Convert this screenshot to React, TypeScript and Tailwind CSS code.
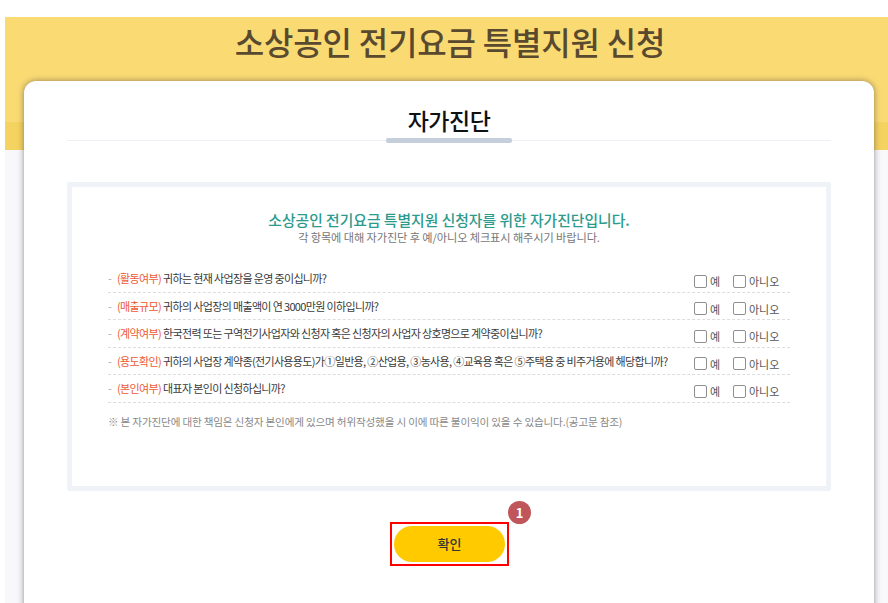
const rows = [
  { tag: "(활동여부)", text: "귀하는 현재 사업장을 운영 중이십니까?" },
  { tag: "(매출규모)", text: "귀하의 사업장의 매출액이 연 3000만원 이하입니까?" },
  { tag: "(계약여부)", text: "한국전력 또는 구역전기사업자와 신청자 혹은 신청자의 사업자 상호명으로 계약중이십니까?" },
  { tag: "(용도확인)", text: "귀하의 사업장 계약종(전기사용용도)가①일반용, ②산업용, ③농사용, ④교육용 혹은 ⑤주택용 중 비주거용에 해당합니까?" },
  { tag: "(본인여부)", text: "대표자 본인이 신청하십니까?" },
];

function CheckItem({ label, className }: { label: string; className: string }) {
  return (
    <label className={`flex items-center gap-[3px] text-[11px] text-[#555] ${className}`}>
      <span className="w-[13px] h-[13px] border border-[#8f8f8f] rounded-[2px] bg-white" />
      {label}
    </label>
  );
}

export default function App() {
  return (
    <div
      className="h-[603px] overflow-hidden bg-white pt-[17px] pl-[5px]"
      style={{ fontFamily: '"Noto Sans CJK KR", "Noto Sans", sans-serif' }}
    >
      <div className="h-[133px] flex flex-col bg-[#fadb73]">
        <h1 className="h-[105px] pl-[7px] text-center text-[32px] leading-[48px] font-medium tracking-[-0.2px] text-[#59492f]">
          소상공인 전기요금 특별지원 신청
        </h1>
        <div className="h-[28px] bg-[#f5d360]" />
      </div>
      <div className="flow-root h-[453px] bg-[#f8f8fa] pl-[19px] pr-[14px]">
        <div className="relative -mt-[69px] h-[600px] bg-white rounded-t-[12px] shadow-[0_0_6px_rgba(60,50,60,0.55)] px-[43px]">
          <div className="relative h-[60px] border-b border-[#eef0f5] text-center">
            <h2 className="pt-[21px] text-[23px] leading-[36px] font-medium tracking-[-0.5px] text-[#111]">자가진단</h2>
            <div className="absolute left-[319px] top-[57px] w-[126px] h-[5px] rounded-[2px] bg-[#c5cedb]" />
          </div>
          <div className="mt-[41px] h-[309px] border-[5px] border-[#eff2f7] rounded-[2px] pt-[22px] pl-[36px] pr-[36px]">
            <p className="text-center text-[14.8px] leading-[21px] font-medium text-[#2c9a8c]">
              소상공인 전기요금 특별지원 신청자를 위한 자가진단입니다.
            </p>
            <p className="text-center text-[11.2px] leading-[15px] tracking-[-0.1px] text-[#777]">
              각 항목에 대해 자가진단 후 예/아니오 체크표시 해주시기 바랍니다.
            </p>
            <div className="mt-[20px]">
              {rows.map((row) => (
                <div
                  key={row.tag}
                  className="flex items-center h-[27.5px] border-b border-dashed border-[#dddddd] text-[11px] tracking-[-0.65px]"
                >
                  <span className="text-[#aaa] w-[9px]">-</span>
                  <span className="text-[#ee5a33]">{row.tag}</span>
                  <span className="ml-[2px] text-[#3a3a3a]">{row.text}</span>
                  <div className="ml-auto flex tracking-normal pt-[6px]">
                    <CheckItem label="예" className="w-[39px]" />
                    <CheckItem label="아니오" className="w-[57px]" />
                  </div>
                </div>
              ))}
            </div>
            <p className="mt-[11px] text-[10.6px] leading-[16px] tracking-[-0.18px] text-[#888]">
              ※ 본 자가진단에 대한 책임은 신청자 본인에게 있으며 허위작성했을 시 이에 따른 불이익이 있을 수 있습니다.(공고문 참조)
            </p>
          </div>
          <div className="relative mt-[31px] w-[119px] h-[44px] border-2 border-[#ff0000] p-[2px] ml-[323px]">
            <button className="w-full h-full rounded-full bg-[#ffcb00] text-[13px] font-medium text-[#333]">확인</button>
            <span className="absolute -top-[23px] left-[116px] w-[23px] h-[23px] rounded-full bg-[#c0565a] text-white text-[13px] font-bold flex items-center justify-center">
              1
            </span>
          </div>
        </div>
      </div>
    </div>
  );
}
